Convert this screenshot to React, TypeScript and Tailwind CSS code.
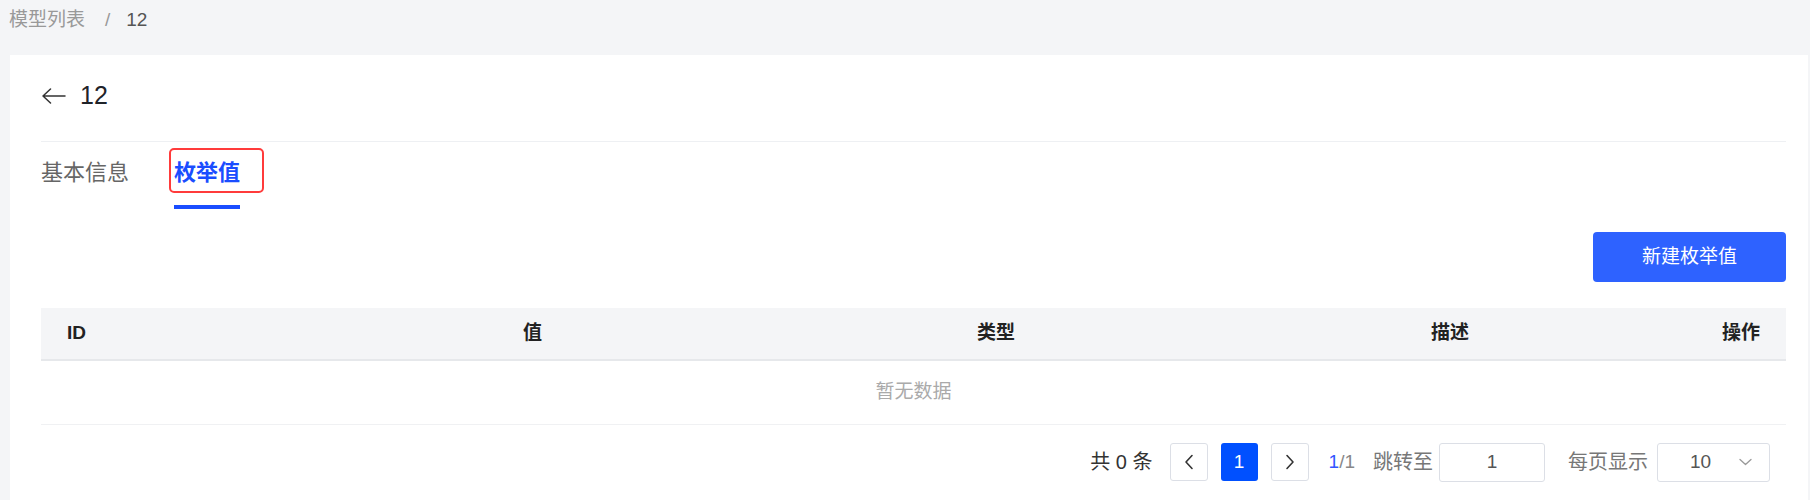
import * as React from 'react';

const font = { fontFamily: '"Liberation Sans", "Noto Sans CJK SC", sans-serif' };

const columns = [
  { key: 'id', title: 'ID', align: 'text-left' },
  { key: 'value', title: '值', align: 'text-left' },
  { key: 'type', title: '类型', align: 'text-left' },
  { key: 'desc', title: '描述', align: 'text-left' },
  { key: 'action', title: '操作', align: 'text-right' },
];

function ChevronLeft() {
  return (
    <svg width="10" height="16" viewBox="0 0 10 16" fill="none">
      <path d="M8 1.5L2 8l6 6.5" stroke="#333" strokeWidth="1.6" strokeLinecap="round" strokeLinejoin="round" />
    </svg>
  );
}

function ChevronRight() {
  return (
    <svg width="10" height="16" viewBox="0 0 10 16" fill="none">
      <path d="M2 1.5L8 8l-6 6.5" stroke="#333" strokeWidth="1.6" strokeLinecap="round" strokeLinejoin="round" />
    </svg>
  );
}

export default function App() {
  const [tab, setTab] = React.useState('enum');

  return (
    <div className="min-h-[500px] w-[1810px] bg-[#f4f5f7]" style={font}>
      {/* Breadcrumb */}
      <div className="flex h-[55px] items-start pl-[9px] pt-[9px] text-[19px] leading-[22px]">
        <span className="text-[#999]">模型列表</span>
        <span className="ml-[20px] text-[#999]">/</span>
        <span className="ml-[16px] text-[#555]">12</span>
      </div>

      {/* Card */}
      <div className="ml-[10px] mr-[2px] bg-white pl-[31px] pr-[12px] pt-[21px] pb-[20px]">
        <div className="flex h-[40px] items-center">
          <svg width="24" height="16" viewBox="0 0 24 16" fill="none" className="ml-[1px]">
            <path d="M1 8h22M8.5 1L1 8l7.5 7" stroke="#333" strokeWidth="1.5" strokeLinecap="round" strokeLinejoin="round" />
          </svg>
          <span className="ml-[14px] text-[25px] text-[#1f2329]">12</span>
        </div>

        <div className="mt-[25px] mr-[10px] border-t border-[#eef0f3]" />

        {/* Tabs */}
        <div className="flex pt-[16px]">
          <button
            onClick={() => setTab('basic')}
            className="flex flex-col"
          >
            <span className={`h-[30px] text-[22px] leading-[30px] ${tab === 'basic' ? 'font-bold text-[#1a4dff]' : 'text-[#666]'}`}>
              基本信息
            </span>
            <span className={`mt-[17px] h-[4px] ${tab === 'basic' ? 'bg-[#1a4dff]' : 'bg-transparent'}`} />
          </button>
          <button
            onClick={() => setTab('enum')}
            className="relative ml-[45px] flex flex-col"
          >
            <span className={`h-[30px] text-[22px] leading-[30px] ${tab === 'enum' ? 'font-bold text-[#1a4dff]' : 'text-[#666]'}`}>
              枚举值
            </span>
            <span className={`mt-[17px] h-[4px] ${tab === 'enum' ? 'bg-[#1a4dff]' : 'bg-transparent'}`} />
            {/* highlight annotation */}
            <span className="pointer-events-none absolute -left-[5px] -top-[10px] h-[45px] w-[95px] rounded-[5px] border-2 border-[#ff3b3b]" />
          </button>
        </div>

        {/* Toolbar */}
        <div className="mt-[23px] mr-[10px] flex justify-end">
          <button className="h-[50px] w-[193px] rounded-[4px] bg-[#2e62ff] text-[19px] text-white">
            新建枚举值
          </button>
        </div>

        {/* Table */}
        <div className="mt-[26px] mr-[10px]">
          <div className="grid h-[53px] grid-cols-[456px_454px_454px_1fr_140px] border-b-2 border-[#e6e8eb] bg-[#f4f5f7]">
            {columns.map((col) => (
              <div
                key={col.key}
                className={`flex items-center px-[26px] text-[19px] font-bold text-[#222] ${col.align === 'text-right' ? 'justify-end' : 'justify-start'}`}
              >
                {col.title}
              </div>
            ))}
          </div>
          <div className="flex h-[64px] items-center justify-center border-b border-[#f0f1f3] text-[19px] text-[#aaa]">
            暂无数据
          </div>
        </div>

        {/* Pagination */}
        <div className="mt-[18px] mr-[26px] flex h-[38px] items-center justify-end text-[20px]">
          <span className="text-[#333]">共 0 条</span>
          <button className="ml-[17px] flex h-[38px] w-[38px] items-center justify-center rounded-[3px] border border-[#dcdfe6] bg-white">
            <ChevronLeft />
          </button>
          <button className="ml-[13px] flex h-[38px] w-[37px] items-center justify-center rounded-[3px] bg-[#0050ff] text-[19px] text-white">
            1
          </button>
          <button className="ml-[13px] flex h-[38px] w-[38px] items-center justify-center rounded-[3px] border border-[#dcdfe6] bg-white">
            <ChevronRight />
          </button>
          <span className="ml-[20px] text-[19px]">
            <span className="text-[#3355ff]">1</span>
            <span className="text-[#888]">/1</span>
          </span>
          <span className="ml-[18px] text-[#777]">跳转至</span>
          <div className="ml-[6px] flex h-[39px] w-[106px] items-center justify-center rounded-[3px] border border-[#dcdfe6] text-[19px] text-[#555]">
            1
          </div>
          <span className="ml-[23px] text-[#777]">每页显示</span>
          <div className="ml-[9px] flex h-[39px] w-[113px] items-center rounded-[3px] border border-[#dcdfe6] pl-[32px] pr-[17px] text-[19px] text-[#555]">
            <span className="flex-1">10</span>
            <svg width="13" height="8" viewBox="0 0 13 8" fill="none">
              <path d="M1 1.5l5.5 5 5.5-5" stroke="#999" strokeWidth="1.3" strokeLinecap="round" strokeLinejoin="round" />
            </svg>
          </div>
        </div>
      </div>
    </div>
  );
}
